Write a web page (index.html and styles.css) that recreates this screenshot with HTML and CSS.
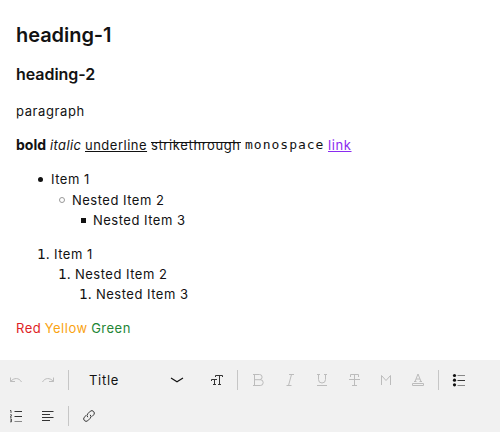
FILE: index.html
```
<!DOCTYPE html>
<html lang="en">
<head>
<meta charset="utf-8">
<title>Editor</title>
<link rel="stylesheet" href="styles.css">
</head>
<body>
<main class="content">
<h1><span>heading-1</span></h1>
<h2><span>heading-2</span></h2>
<p class="para">paragraph</p>
<p class="styles"><b>bold</b><i>italic</i><u>underline</u><s>strikethrough</s><code>monospace</code><a href="#">link</a></p>
<ul class="list">
<li class="l1"><span class="dot"></span>Item 1</li>
<li class="l2"><span class="dot ring"></span>Nested Item 2</li>
<li class="l3"><span class="dot square"></span>Nested Item 3</li>
</ul>
<ol class="list numbered">
<li class="l1"><span class="num">1.</span>Item 1</li>
<li class="l2"><span class="num">1.</span>Nested Item 2</li>
<li class="l3"><span class="num">1.</span>Nested Item 3</li>
</ol>
<p class="colors"><span class="red">Red</span><span class="yellow">Yellow</span><span class="green">Green</span></p>
</main>
<div class="toolbar">
<div class="row">
<button class="off"><svg viewBox="0 0 16 16"><path d="M2.500 5.500v4h4.500M2.500 9.500C6 5.500 11 5.500 13.500 10"/></svg></button>
<button class="off"><svg viewBox="0 0 16 16"><path d="M13.500 5.500v4H9M13.500 9.500C10 5.500 5 5.500 2.500 10"/></svg></button>
<i class="sep"></i>
<div class="select"><span>Title</span><svg viewBox="0 0 16 16"><path d="M2 6l6 3.700L14 6" stroke-width="1.200"/></svg></div>
<button><svg viewBox="0 0 16 16"><path d="M6.500 5V3.500h7V5M10.500 3.500v9.500M9 12.500h3M2.500 9V7.500H8M5.500 7.500V13M4 12.500h3"/></svg></button>
<i class="sep"></i>
<button class="off"><svg viewBox="0 0 16 16"><path d="M3 2.500h6.500a2.600 2.600 0 010 5.200H4.500M9.500 7.700h.8a2.900 2.900 0 010 5.800H3M4.500 2.500v11"/></svg></button>
<button class="off"><svg viewBox="0 0 16 16"><path d="M7 2.500h5M4.500 13.500h5M9.500 2.500l-3 11"/></svg></button>
<button class="off"><svg viewBox="0 0 16 16"><path d="M3 2.500h3M10 2.500h3M4.500 2.500v5a3.500 3.500 0 007 0v-5M3 13.500h10"/></svg></button>
<button class="off"><svg viewBox="0 0 16 16"><path d="M4.500 5V2.500h8V5M8.500 2.500v11M6 13.500h5M3 7.500h11"/></svg></button>
<button class="off"><svg viewBox="0 0 16 16"><path d="M3.500 13V3.500l4.500 5 4.500-5V13"/></svg></button>
<button class="off"><svg viewBox="0 0 16 16"><path d="M5 9.500l3-7.500 3 7.500M6 7h4M4 9.500h2.500M9.500 9.500H12M2.500 11.500h11v2h-11z"/></svg></button>
<i class="sep"></i>
<button><svg viewBox="0 0 16 16"><path class="gray" d="M6.500 3.500H14M6.500 13.500H14"/><path d="M6.500 8.500H14"/><g class="fill"><circle cx="3.500" cy="3.500" r="1.600"/><circle cx="3.500" cy="8.200" r="1.600"/><circle cx="3.500" cy="12.800" r="1.600"/></g></svg></button>
</div>
<div class="row">
<button><svg viewBox="0 0 16 16"><path d="M6.500 3.500H14M6.500 8.500H14"/><path class="digits" d="M2 2.500h1v2.500M2 6.800h1.500v1L2 9.200h1.800M2 11h1.500v1.500H2.500M3.500 12.500V13.800H2"/><path class="gray" d="M6.500 13.500H14"/></svg></button>
<button><svg viewBox="0 0 16 16"><path d="M2 3.500h11.500M2 6.500h8M2 9.500h11.500M2 12.500h8"/></svg></button>
<i class="sep"></i>
<button><svg viewBox="0 0 16 16"><path d="M6.800 9.200a2.500 2.500 0 010-3.500l2.500-2.500a2.500 2.500 0 013.500 3.500L11 8.500M9.200 6.800a2.500 2.500 0 010 3.500l-2.500 2.500a2.500 2.500 0 01-3.500-3.500L5 7.500"/></svg></button>
</div>
</div>
</body>
</html>
```

FILE: styles.css
```
* { box-sizing: border-box; }
body { margin: 0; background: #fff; color: #121212; font: 13px/20px Inter, sans-serif; letter-spacing: .5px; }
.content { height: 360px; padding: 20px 16px 0; }
h1, h2, p, ul, ol { margin: 0; padding: 0; list-style: none; }
h1 { font-size: 20px; line-height: 30px; font-weight: 600; letter-spacing: -.05px; }
h2 { margin-top: 12px; font-size: 16px; line-height: 24px; font-weight: 600; letter-spacing: -.05px; }
.para { margin-top: 15px; letter-spacing: .6px; }
.styles { display: flex; margin-top: 14px; }
.styles b { width: 34px; font-size: 14px; letter-spacing: 0; }
.styles i { width: 35px; letter-spacing: .4px; }
.styles u { width: 62px; margin-right: 4px; text-underline-offset: 1px; }
.styles s { width: 90px; margin-right: 4px; letter-spacing: .62px; text-decoration: none; background: linear-gradient(#121212, #121212) 0 7px / 100% 1px no-repeat; }
code { width: 83px; font: 13px/20px "DejaVu Sans Mono", monospace; letter-spacing: 1px; }
a { color: #8a2bf0; text-underline-offset: 1px; letter-spacing: .6px; }
.list { margin-top: 14px; }
li { display: flex; align-items: center; height: 20px; }
ul .l1 { height: 21px; padding-bottom: 1px; }
.l1 { padding-left: 22px; }
.l2 { padding-left: 43px; }
.l3 { padding-left: 64px; }
.dot { width: 5px; height: 5px; margin-right: 8px; border-radius: 50%; background: #121212; }
.ring { background: none; border: 1px solid #999; width: 6px; height: 6px; margin-right: 7px; }
.square { border-radius: 0; margin-left: 1px; margin-right: 7px; }
.num { width: 16px; margin-left: -1px; margin-right: 1px; font: 14px/20px "DejaVu Sans", sans-serif; letter-spacing: -.5px; }
.colors { display: flex; gap: 3.5px; margin-top: 14px; }
.red { color: #e01e26; }
.yellow { color: #faa312; }
.green { color: #238636; }
.toolbar { height: 72px; background: #f1f1f1; padding-top: 4px; }
.row { display: flex; align-items: center; height: 32px; margin-bottom: 4px; }
button { display: flex; align-items: center; justify-content: center; width: 32px; height: 32px; padding: 0; border: 0; background: none; color: #333; }
svg { width: 16px; height: 16px; fill: none; stroke: currentColor; stroke-width: 1; }
.off { color: #bcbcbc; }
.gray { stroke: #888; }
.digits { stroke-width: .8; }
.fill { fill: #111; stroke: none; }
.sep { width: 1px; height: 20px; margin: 0 4px; background: #c6c6c6; }
.select { display: flex; align-items: center; justify-content: space-between; width: 128px; padding: 0 16px; letter-spacing: .7px; }
```
